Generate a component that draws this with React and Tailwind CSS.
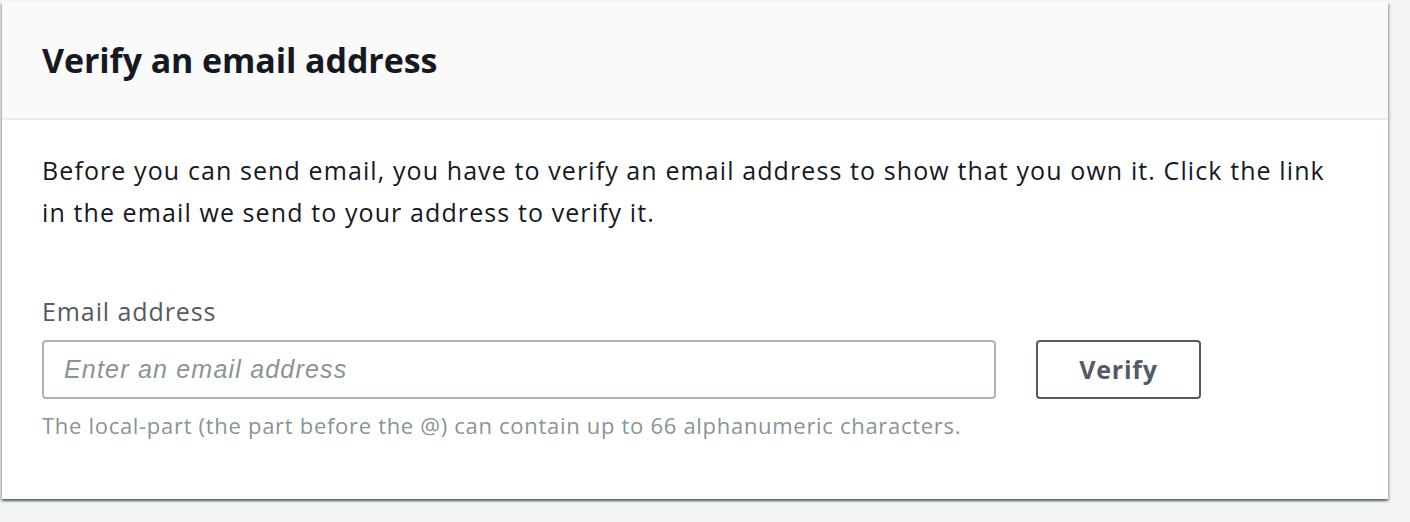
export default function App() {
  return (
    <div
      className="min-h-[522px] w-[1410px] bg-[#f2f3f3] pt-[2px] pl-[2px]"
      style={{ fontFamily: "'Open Sans', 'Noto Sans', sans-serif" }}
    >
      <div className="w-[1386px] bg-white shadow-[0_2px_2px_0_rgba(0,28,36,0.5),2px_2px_2px_0_rgba(0,28,36,0.15),-2px_2px_2px_0_rgba(0,28,36,0.15)]">
        {/* header */}
        <div className="h-[118px] bg-[#fafafa] border-b-2 border-[#eaeded] flex items-center px-10">
          <h2 className="text-[34px] font-bold text-[#16191f] tracking-[-0.1px]">
            Verify an email address
          </h2>
        </div>

        {/* body */}
        <div className="px-10 pt-[29px] pb-[60px]">
          <p className="text-[25px] leading-[42px] tracking-[1.1px] text-[#16191f] max-w-[1300px]">
            Before you can send email, you have to verify an email address to show that you own it. Click the link in the email we send to your address to verify it.
          </p>

          <label className="block mt-[62px] text-[25px] leading-[32px] tracking-[0.9px] text-[#545b64]">
            Email address
          </label>
          <div className="mt-[13px] flex items-center gap-10">
            <input
              type="text"
              placeholder="Enter an email address"
              className="w-[954px] h-[59px] rounded-[4px] border-2 border-[#aab7b8] bg-white px-[20px] text-[25px] italic tracking-[1.2px] placeholder:text-[#879596] outline-none"
              style={{ fontFamily: "'Liberation Sans', Arial, sans-serif" }}
            />
            <button className="w-[165px] h-[59px] rounded-[4px] border-2 border-[#545b64] bg-white text-[25px] font-bold tracking-[0.8px] text-[#545b64]">
              Verify
            </button>
          </div>
          <p className="mt-[12px] text-[22px] leading-[28px] tracking-[0.7px] text-[#879596]">
            The local-part (the part before the @) can contain up to 66 alphanumeric characters.
          </p>
        </div>
      </div>
    </div>
  );
}
